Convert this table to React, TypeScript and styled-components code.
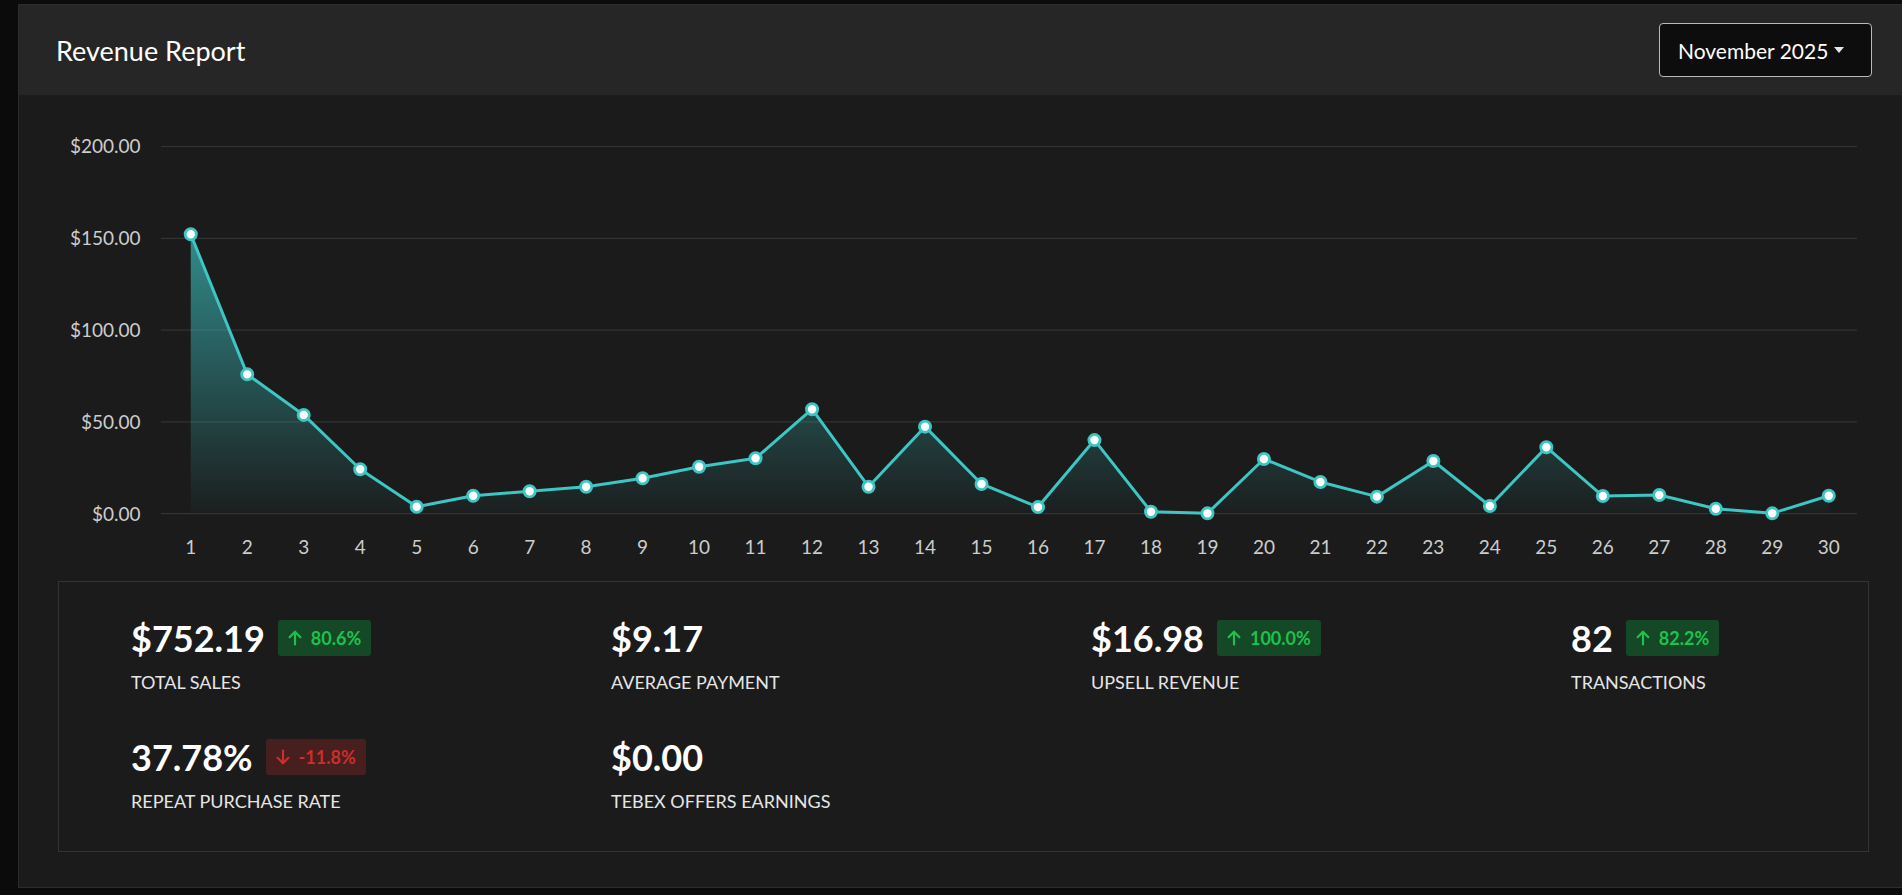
import * as React from "react";
import styled, { createGlobalStyle } from "styled-components";

const GlobalStyle = createGlobalStyle`
  html, body {
    margin: 0;
    padding: 0;
    background: #0b0b0c;
    overflow: hidden;
  }
  body {
    font-family: Lato, "Noto Sans", "Liberation Sans", sans-serif;
    color: #fff;
  }
`;

// daily revenue for November
const revenue = [
  152.2, 75.9, 53.8, 24.2, 3.8, 9.8, 12.2, 14.7, 19.3, 25.6, 30.2, 56.9, 14.7,
  47.4, 16.2, 3.6, 40.1, 1.1, 0.2, 29.8, 17.3, 9.3, 28.7, 4.2, 36.2, 9.6, 10.2,
  2.7, 0.2, 9.8,
];

interface Stat {
  value: string;
  label: string;
  change?: number;
}

const stats: Stat[] = [
  { value: "$752.19", label: "Total Sales", change: 80.6 },
  { value: "$9.17", label: "Average Payment" },
  { value: "$16.98", label: "Upsell Revenue", change: 100.0 },
  { value: "82", label: "Transactions", change: 82.2 },
  { value: "37.78%", label: "Repeat Purchase Rate", change: -11.8 },
  { value: "$0.00", label: "Tebex Offers Earnings" },
];

const CHART_W = 1890;
const CHART_H = 486;
const PLOT_LEFT = 143.5;
const PLOT_RIGHT = 1838;
const Y_TOP = 51.5;
const Y_ZERO = 418.7;
const STEP = (PLOT_RIGHT - PLOT_LEFT) / revenue.length;

const yFor = (v: number) => Y_ZERO - (v / 200) * (Y_ZERO - Y_TOP);
const xFor = (i: number) => PLOT_LEFT + STEP * (i + 0.5);

function RevenueChart() {
  const points = revenue.map((v, i) => [xFor(i), yFor(v)]);
  const line = points.map(([x, y], i) => `${i ? "L" : "M"}${x} ${y}`).join(" ");
  const area = `${line} L${xFor(revenue.length - 1)} ${Y_ZERO} L${xFor(0)} ${Y_ZERO} Z`;
  const ticks = [200, 150, 100, 50, 0];

  return (
    <ChartSvg width={CHART_W} height={CHART_H} viewBox={`0 0 ${CHART_W} ${CHART_H}`}>
      <defs>
        <linearGradient id="revFill" x1="0" y1="0" x2="0" y2="1">
          <stop offset="0" stopColor="#3dc5c5" stopOpacity="0.66" />
          <stop offset="1" stopColor="#3dc5c5" stopOpacity="0.02" />
        </linearGradient>
      </defs>
      {ticks.map((t) => (
        <g key={t}>
          <line
            x1={142}
            x2={PLOT_RIGHT}
            y1={yFor(t)}
            y2={yFor(t)}
            stroke="#333333"
            strokeWidth={1.2}
          />
          <AxisText x={121.5} y={yFor(t) + 6.8} textAnchor="end">
            ${t.toFixed(2)}
          </AxisText>
        </g>
      ))}
      <path d={area} fill="url(#revFill)" />
      <path d={line} fill="none" stroke="#3cc6c4" strokeWidth={3} strokeLinejoin="round" />
      {points.map(([x, y], i) => (
        <circle key={i} cx={x} cy={y} r={5.6} fill="#fff" stroke="#3cc6c4" strokeWidth={2.8} />
      ))}
      {revenue.map((_, i) => (
        <AxisText key={i} x={xFor(i)} y={459} textAnchor="middle">
          {i + 1}
        </AxisText>
      ))}
    </ChartSvg>
  );
}

function ArrowIcon({ down }: { down?: boolean }) {
  return (
    <svg width="14" height="16" viewBox="0 0 14 16" fill="none">
      <g
        stroke="currentColor"
        strokeWidth={2.2}
        strokeLinecap="round"
        strokeLinejoin="round"
        transform={down ? "rotate(180 7 8)" : undefined}
      >
        <path d="M7 14.5V1.8" />
        <path d="M1.6 7.2L7 1.8l5.4 5.4" />
      </g>
    </svg>
  );
}

export default function App() {
  return (
    <>
      <GlobalStyle />
      <Card>
        <Header>
          <Title>Revenue Report</Title>
          <MonthButton>
            November 2025
            <Caret />
          </MonthButton>
        </Header>
        <RevenueChart />
        <StatsBox>
          {stats.map((s) => (
            <StatItem key={s.label}>
              <ValueRow>
                <Value>{s.value}</Value>
                {s.change !== undefined && (
                  <Badge negative={s.change < 0}>
                    <ArrowIcon down={s.change < 0} />
                    {s.change.toFixed(1)}%
                  </Badge>
                )}
              </ValueRow>
              <Label>{s.label}</Label>
            </StatItem>
          ))}
        </StatsBox>
      </Card>
    </>
  );
}

const Card = styled.div`
  box-sizing: border-box;
  margin: 4px 0 0 18px;
  width: 1892px;
  height: 884px;
  border: 1px solid #2c2c2c;
  background: #1b1b1b;
  display: flex;
  flex-direction: column;
`;

const Header = styled.div`
  height: 90px;
  flex-shrink: 0;
  background: #262626;
  display: flex;
  align-items: center;
  justify-content: space-between;
  padding: 0 37px;
`;

const Title = styled.h2`
  margin: 0;
  font-size: 27px;
  font-weight: 400;
  color: #fff;
`;

const MonthButton = styled.button`
  box-sizing: border-box;
  height: 54px;
  width: 213px;
  padding: 0 0 0 18px;
  display: flex;
  align-items: center;
  gap: 6px;
  background: #0d0d0d;
  border: 1px solid #b9b9b9;
  border-radius: 4px;
  color: #fff;
  font-family: Lato, "Noto Sans", sans-serif;
  font-size: 21px;
  cursor: pointer;
`;

const Caret = styled.span`
  width: 0;
  height: 0;
  border-left: 5.5px solid transparent;
  border-right: 5.5px solid transparent;
  border-top: 6px solid #e6e6e6;
`;

const ChartSvg = styled.svg`
  display: block;
  flex-shrink: 0;
`;

const AxisText = styled.text`
  font-family: Lato, "Noto Sans", sans-serif;
  font-size: 19px;
  fill: #cdcdcd;
`;

const StatsBox = styled.div`
  box-sizing: border-box;
  margin: 0 40px 0 39px;
  border: 1px solid #333333;
  padding: 35px 0 39px 72px;
  display: grid;
  grid-template-columns: 480px 480px 480px 1fr;
  row-gap: 43px;
`;

const StatItem = styled.div`
  display: flex;
  flex-direction: column;
  gap: 13px;
`;

const ValueRow = styled.div`
  display: flex;
  align-items: center;
  gap: 13px;
`;

const Value = styled.span`
  font-size: 36px;
  font-weight: 700;
  line-height: 42px;
  color: #fff;
`;

const Badge = styled.span<{ negative?: boolean }>`
  display: inline-flex;
  align-items: center;
  gap: 9px;
  height: 36px;
  box-sizing: border-box;
  padding: 0 10px;
  border-radius: 3px;
  font-size: 18px;
  font-weight: 700;
  background: ${(p) => (p.negative ? "#471f1f" : "#144826")};
  color: ${(p) => (p.negative ? "#cc2d2d" : "#1fc14c")};
`;

const Label = styled.span`
  font-size: 18px;
  line-height: 21px;
  text-transform: uppercase;
  color: #e6e6e6;
`;
